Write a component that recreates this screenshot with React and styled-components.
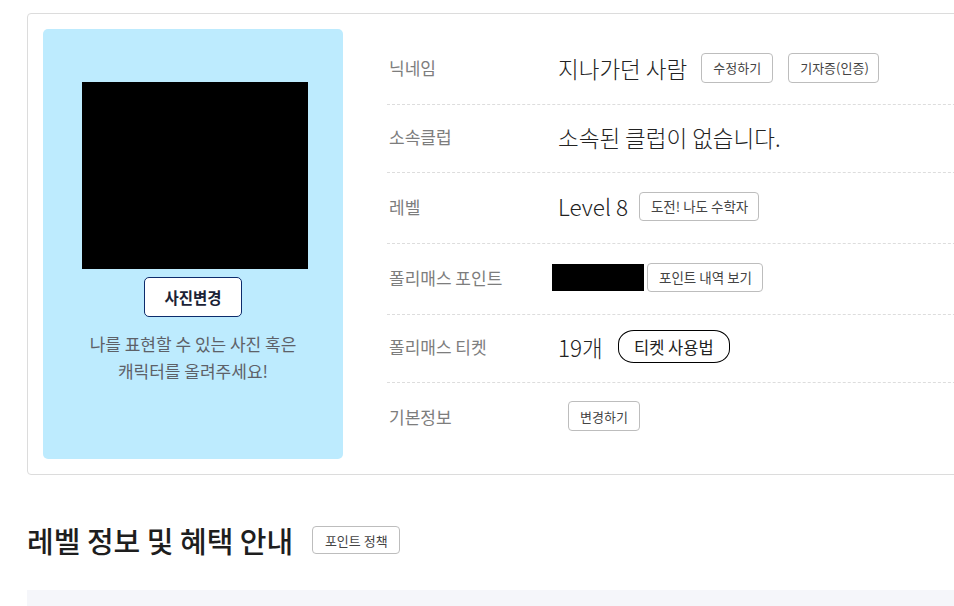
import React from "react";
import styled, { createGlobalStyle } from "styled-components";

const Global = createGlobalStyle`
  html, body { margin: 0; padding: 0; background: #fff; }
  body {
    font-family: "Noto Sans CJK KR", "Noto Sans", sans-serif;
    color: #222;
    overflow: hidden;
  }
  * { box-sizing: border-box; }
`;

const Page = styled.div`
  width: 954px;
  height: 606px;
  overflow: hidden;
  padding: 13px 0 0 27px;
`;

const Card = styled.section`
  width: 1000px;
  border: 1px solid #dcdcdc;
  border-radius: 4px;
  padding: 15px;
  display: flex;
  gap: 44px;
`;

const PhotoPanel = styled.div`
  width: 300px;
  height: 430px;
  flex: none;
  background: #bdebfe;
  border-radius: 5px;
  display: flex;
  flex-direction: column;
  align-items: center;
  padding-top: 53px;
`;

const Photo = styled.div`
  width: 226px;
  height: 187px;
  background: #000;
  margin-left: 4px;
`;

const PhotoButton = styled.button`
  margin-top: 8px;
  width: 98px;
  height: 40px;
  border: 1px solid #0d2c6c;
  border-radius: 5px;
  background: #fff;
  font-family: inherit;
  font-size: 15.5px;
  font-weight: 700;
  color: #1b2236;
  cursor: pointer;
`;

const PhotoHint = styled.p`
  margin: 13px 0 0;
  font-size: 17px;
  line-height: 27px;
  color: #5d6168;
  text-align: center;
`;

const InfoList = styled.div`
  flex: 1;
  margin-top: 6px;
  display: flex;
  flex-direction: column;
`;

const Row = styled.div`
  height: ${(p) => p.$h ?? 70}px;
  display: flex;
  align-items: center;
  padding: 0 0 4px 2px;
  border-bottom: ${(p) => (p.$last ? "none" : "1px dashed #dddddd")};
`;

const Label = styled.div`
  width: 169px;
  flex: none;
  font-size: 17px;
  color: #7d7d7d;
`;

const Value = styled.div`
  display: flex;
  align-items: center;
  gap: ${(p) => p.$gap ?? 14}px;
  margin-left: ${(p) => p.$shift ?? 0}px;
`;

const ValueText = styled.span`
  font-size: 22.5px;
  font-weight: 300;
  color: #222;
`;

const SmallButton = styled.button`
  height: ${(p) => p.$h ?? 30}px;
  width: ${(p) => (p.$w ? `${p.$w}px` : "auto")};
  padding: 0 ${(p) => p.$px ?? 11}px;
  border: 1px solid #bdbdbd;
  border-radius: 4px;
  background: #fff;
  font-family: inherit;
  font-size: ${(p) => p.$fs ?? 13}px;
  color: #444;
  white-space: nowrap;
  cursor: pointer;
`;

const TicketButton = styled.button`
  height: 33px;
  width: 112px;
  border: 1px solid #000;
  border-radius: 16px / 14px;
  background: #fff;
  font-family: inherit;
  font-size: 16.5px;
  font-weight: 400;
  color: #222;
  padding: 0;
  cursor: pointer;
`;

const HiddenPoints = styled.div`
  width: 92px;
  height: 27px;
  background: #000;
`;

const ButtonGroup = styled.div`
  display: flex;
  gap: 15px;
`;

const SectionHead = styled.div`
  margin-top: 44px;
  display: flex;
  align-items: center;
  gap: 19px;
`;

const Heading = styled.h2`
  margin: 0;
  font-size: 29px;
  font-weight: 500;
  color: #1e1e1e;
`;

const GreyPanel = styled.div`
  margin-top: 29px;
  width: 1000px;
  height: 60px;
  background: #f5f6fa;
`;

export default function App() {
  return (
    <>
      <Global />
      <Page>
        <Card>
          <PhotoPanel>
            <Photo />
            <PhotoButton>사진변경</PhotoButton>
            <PhotoHint>
              나를 표현할 수 있는 사진 혹은
              <br />
              캐릭터를 올려주세요!
            </PhotoHint>
          </PhotoPanel>
          <InfoList>
            <Row>
              <Label>닉네임</Label>
              <Value $gap={14}>
                <ValueText>지나가던 사람</ValueText>
                <ButtonGroup>
                  <SmallButton $w={72}>수정하기</SmallButton>
                  <SmallButton $w={91}>기자증(인증)</SmallButton>
                </ButtonGroup>
              </Value>
            </Row>
            <Row $h={68}>
              <Label>소속클럽</Label>
              <Value>
                <ValueText>소속된 클럽이 없습니다.</ValueText>
              </Value>
            </Row>
            <Row $h={71}>
              <Label>레벨</Label>
              <Value $gap={11}>
                <ValueText>Level 8</ValueText>
                <SmallButton $fs={13.5} $h={29} $w={120}>
                  도전! 나도 수학자
                </SmallButton>
              </Value>
            </Row>
            <Row $h={71}>
              <Label>폴리매스 포인트</Label>
              <Value $gap={3} $shift={-6}>
                <HiddenPoints />
                <SmallButton $fs={13.5} $h={29} $w={116}>
                  포인트 내역 보기
                </SmallButton>
              </Value>
            </Row>
            <Row $h={68}>
              <Label>폴리매스 티켓</Label>
              <Value $gap={15}>
                <ValueText>19개</ValueText>
                <TicketButton>티켓 사용법</TicketButton>
              </Value>
            </Row>
            <Row $last>
              <Label>기본정보</Label>
              <Value $shift={10}>
                <SmallButton $w={72}>변경하기</SmallButton>
              </Value>
            </Row>
          </InfoList>
        </Card>
        <SectionHead>
          <Heading>레벨 정보 및 혜택 안내</Heading>
          <SmallButton $h={28} $w={88}>
            포인트 정책
          </SmallButton>
        </SectionHead>
        <GreyPanel />
      </Page>
    </>
  );
}
